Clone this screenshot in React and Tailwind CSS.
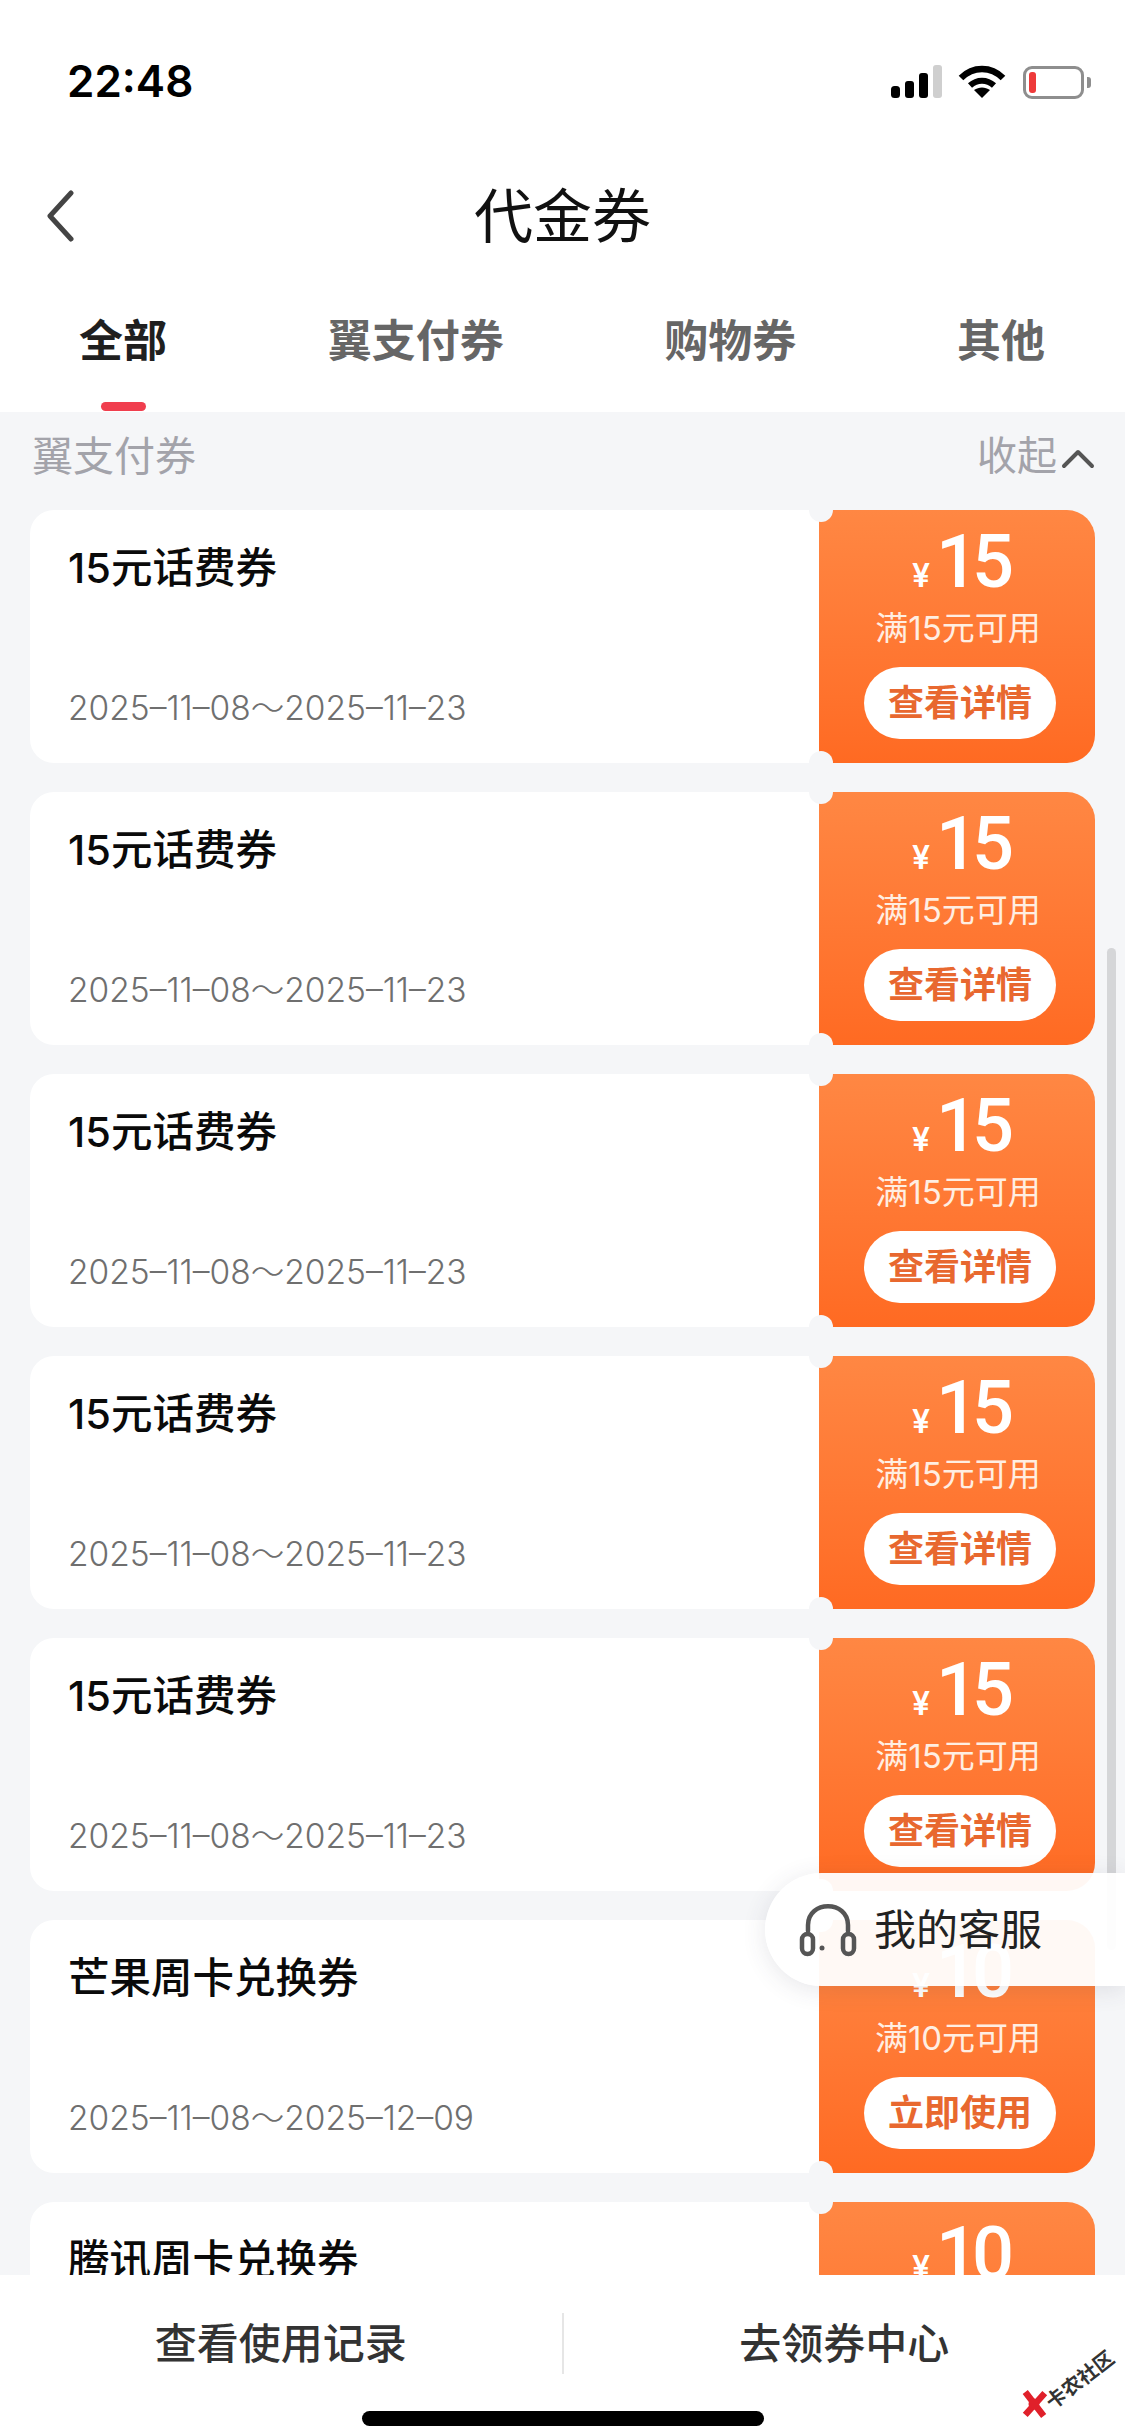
const coupons = [
  { title: "15元话费券", end: "2025–11–23", amount: "15", limit: "满15元可用", action: "查看详情" },
  { title: "15元话费券", end: "2025–11–23", amount: "15", limit: "满15元可用", action: "查看详情" },
  { title: "15元话费券", end: "2025–11–23", amount: "15", limit: "满15元可用", action: "查看详情" },
  { title: "15元话费券", end: "2025–11–23", amount: "15", limit: "满15元可用", action: "查看详情" },
  { title: "15元话费券", end: "2025–11–23", amount: "15", limit: "满15元可用", action: "查看详情" },
  { title: "芒果周卡兑换券", end: "2025–12–09", amount: "10", limit: "满10元可用", action: "立即使用" },
  { title: "腾讯周卡兑换券", end: "2025–12–09", amount: "10", limit: "满10元可用", action: "立即使用" },
];

function StatusIcons() {
  return (
    <div className="flex items-center">
      <svg width="54" height="34" viewBox="0 0 54 34">
        <rect x="0" y="21" width="9" height="12" rx="3.5" fill="#000" />
        <rect x="14" y="16" width="9" height="17" rx="3" fill="#000" />
        <rect x="28" y="8" width="9" height="25" rx="3" fill="#000" />
        <rect x="42" y="0" width="9" height="33" rx="3" fill="#cfcfcf" />
      </svg>
      <svg className="ml-[13px]" width="48" height="34" viewBox="0 0 48 34">
        <path d="M3 13 C15 1 33 1 45 13" fill="none" stroke="#000" strokeWidth="6.5" />
        <path d="M12 20.5 C19 14 29 14 36 20.5" fill="none" stroke="#000" strokeWidth="6" />
        <path d="M16 25 C21 21.5 27 21.5 32 25 L24 33 Z" fill="#000" />
      </svg>
      <div className="ml-[17px] flex items-center">
        <div className="h-[33px] w-[61px] rounded-[9px] border-[3px] border-[#8e8e8e] py-[3px] pl-[3px]">
          <div className="h-full w-[7px] rounded-[3px] bg-[#ee3a3a]" />
        </div>
        <div className="ml-[3px] h-[11px] w-[4px] rounded-r-[3px] bg-[#8e8e8e]" />
      </div>
    </div>
  );
}

function CouponCard({ coupon }) {
  return (
    <div className="flex h-[253px] shrink-0">
      <div className="flex w-[789px] flex-col justify-between rounded-l-[24px] bg-white pb-[35px] pl-[38px] pt-[33px]">
        <div className="text-[41.5px] font-medium leading-[50px] text-[#0a0a0a]">{coupon.title}</div>
        <div className="text-[33.5px] font-light leading-[40px] text-[#6f6f6f]">2025–11–08～{coupon.end}</div>
      </div>
      <div className="relative flex w-[276px] flex-col items-center rounded-r-[28px] bg-gradient-to-b from-[#ff8743] to-[#ff6a22] pl-[6px] text-white">
        <div className="absolute -left-[10px] -top-[12px] h-[24px] w-[24px] rounded-full bg-[#f5f6f8]" />
        <div className="absolute -bottom-[12px] -left-[10px] h-[24px] w-[24px] rounded-full bg-[#f5f6f8]" />
        <div className="mt-[12px] flex h-[80px] items-baseline">
          <span className="mr-[6px] text-[32px] font-semibold">¥</span>
          <span className="font-['Roboto'] text-[74px] font-medium leading-[80px] tracking-[-6px]">{coupon.amount}</span>
        </div>
        <div className="mt-[6px] pr-[4px] text-[33px] leading-[40px] text-[#ffeee2]">{coupon.limit}</div>
        <div className="mt-[19px] flex h-[72px] w-[192px] items-center justify-center rounded-full bg-white text-[36px] font-bold text-[#e8682f]">
          {coupon.action}
        </div>
      </div>
    </div>
  );
}

export default function App() {
  return (
    <div
      className="relative flex h-[2436px] w-[1125px] flex-col overflow-hidden bg-[#f5f6f8]"
      style={{ fontFamily: '"Inter", "Noto Sans CJK SC", sans-serif' }}
    >
      {/* Status bar */}
      <div className="flex h-[150px] shrink-0 items-start justify-between bg-white pl-[67px] pr-[34px] pt-[53px]">
        <div className="text-[44px] font-semibold leading-[56px] text-black">22:48</div>
        <div className="pt-[12px]">
          <StatusIcons />
        </div>
      </div>

      {/* Title */}
      <div className="relative flex h-[134px] shrink-0 items-center justify-center bg-white">
        <svg className="absolute left-[44px] top-[40px]" width="32" height="52" viewBox="0 0 32 52">
          <path d="M27 3 L6 26 L27 49" fill="none" stroke="#444" strokeWidth="5" strokeLinecap="round" strokeLinejoin="round" />
        </svg>
        <div className="text-[59px] leading-[70px] text-[#111]">代金券</div>
      </div>

      {/* Tabs */}
      <div className="relative flex h-[128px] shrink-0 items-start justify-between bg-white pl-[79px] pr-[80px] pt-[29px]">
        <div className="text-[44px] font-bold leading-[56px] text-[#1f1f1f]">全部</div>
        <div className="text-[44px] font-semibold leading-[56px] text-[#666]">翼支付券</div>
        <div className="text-[44px] font-semibold leading-[56px] text-[#666]">购物券</div>
        <div className="text-[44px] font-semibold leading-[56px] text-[#666]">其他</div>
        <div className="absolute bottom-[1px] left-[101px] h-[9px] w-[45px] rounded-full bg-[#f03e4e]" />
      </div>

      {/* Section header */}
      <div className="flex h-[98px] shrink-0 items-start justify-between pl-[32px] pr-[30px] pt-[19px]">
        <div className="text-[41px] leading-[50px] text-[#a3a3aa]">翼支付券</div>
        <div className="flex items-center text-[40px] leading-[50px] text-[#a3a3aa]">
          收起
          <svg className="ml-[4px] mt-[6px]" width="34" height="20" viewBox="0 0 34 20">
            <path d="M3 17 L17 3 L31 17" fill="none" stroke="#555" strokeWidth="4" strokeLinecap="round" strokeLinejoin="round" />
          </svg>
        </div>
      </div>

      {/* Coupons */}
      <div className="flex flex-1 flex-col gap-[29px] overflow-hidden pl-[30px]">
        {coupons.map((coupon, i) => (
          <CouponCard key={i} coupon={coupon} />
        ))}
      </div>

      {/* Bottom bar */}
      <div className="relative h-[161px] shrink-0 bg-white">
        <div className="flex h-[136px] items-center">
          <div className="flex-1 text-center text-[42px] font-medium text-[#333]">查看使用记录</div>
          <div className="h-[61px] w-[2px] bg-[#e6e6e6]" />
          <div className="flex-1 text-center text-[42px] font-medium text-[#333]">去领券中心</div>
        </div>
        <div className="mx-auto h-[15px] w-[402px] rounded-full bg-black" />
      </div>

      {/* Scrollbar */}
      <div className="absolute left-[1107px] top-[948px] h-[1002px] w-[9px] rounded-full bg-[#8a8a8f]/30" />

      {/* Floating service pill */}
      <div className="absolute left-[765px] top-[1873px] flex h-[113px] w-[360px] items-center rounded-l-full bg-white/95 pl-[32px] shadow-[0_4px_24px_rgba(60,60,80,0.12)]">
        <svg width="62" height="58" viewBox="0 0 62 58">
          <path d="M11 30 V24 C11 -1 51 -1 51 24 V30" fill="none" stroke="#555" strokeWidth="4.5" strokeLinecap="round" />
          <rect x="5" y="33" width="11" height="20" rx="5.5" fill="none" stroke="#555" strokeWidth="4.5" />
          <rect x="46" y="33" width="11" height="20" rx="5.5" fill="none" stroke="#555" strokeWidth="4.5" />
          <circle cx="25" cy="47" r="2.5" fill="#555" />
        </svg>
        <div className="ml-[15px] text-[42px] leading-[50px] text-[#222]">我的客服</div>
      </div>

      {/* Watermark */}
      <div className="absolute left-[1022px] top-[2345px] flex h-[76px] w-[98px] items-end">
        <svg width="30" height="34" viewBox="0 0 24 28">
          <path d="M3 3 L20 25 M21 4 L3 24" stroke="#e0202a" strokeWidth="6" />
          <circle cx="11" cy="14" r="5" fill="#e0202a" />
        </svg>
        <div className="mb-[30px] -ml-[8px] -rotate-[38deg] whitespace-nowrap text-[20px] font-bold leading-[22px] text-[#333]">
          卡农社区
        </div>
      </div>
    </div>
  );
}
